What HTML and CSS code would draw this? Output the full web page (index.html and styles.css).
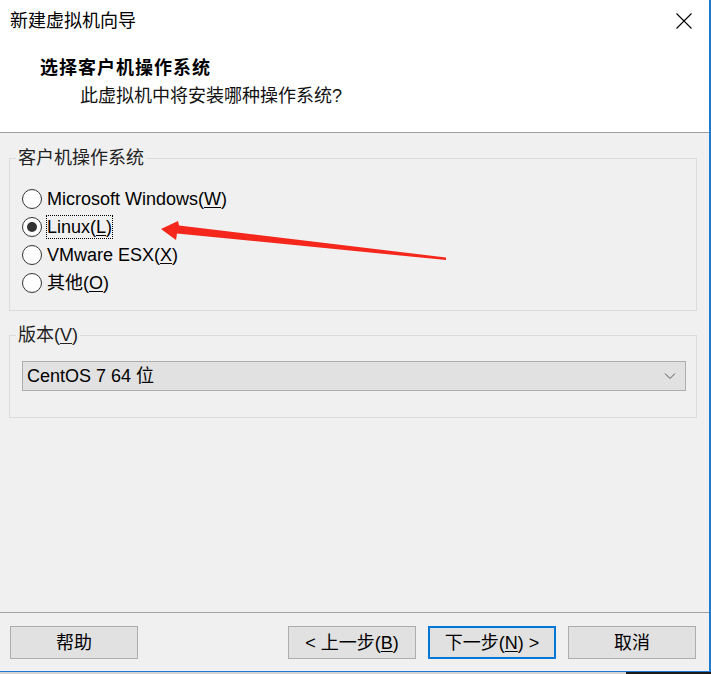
FILE: index.html
```html
<!DOCTYPE html>
<html lang="zh-CN">
<head>
    <meta charset="UTF-8">
    <meta name="viewport" content="width=device-width, initial-scale=1.0">
    <title>新建虚拟机向导</title>
    <link rel="stylesheet" href="styles.css">
</head>
<body>
    <div class="window">
        <div class="titlebar">
            <span class="title">新建虚拟机向导</span>
            <svg class="close-btn" width="16" height="16" viewBox="0 0 16 16">
                <path d="M0.5 0.5 L15.5 15.5 M15.5 0.5 L0.5 15.5" stroke="#000" stroke-width="1.1" fill="none"/>
            </svg>
        </div>

        <div class="header">
            <div class="heading">选择客户机操作系统</div>
            <div class="subheading">此虚拟机中将安装哪种操作系统?</div>
        </div>

        <div class="content">
            <fieldset class="group group-os">
                <legend>客户机操作系统</legend>
                <div class="radio-list">
                    <label class="radio"><span class="radio-circle"></span><span class="radio-text">Microsoft Windows(<u>W</u>)</span></label>
                    <label class="radio checked"><span class="radio-circle"></span><span class="radio-text focused">Linux(<u>L</u>)</span></label>
                    <label class="radio"><span class="radio-circle"></span><span class="radio-text">VMware ESX(<u>X</u>)</span></label>
                    <label class="radio"><span class="radio-circle"></span><span class="radio-text">其他(<u>O</u>)</span></label>
                </div>
            </fieldset>

            <fieldset class="group group-version">
                <legend>版本(<u>V</u>)</legend>
                <div class="select">
                    <span class="select-value">CentOS 7 64 位</span>
                    <svg class="chevron" width="12" height="8" viewBox="0 0 12 8">
                        <path d="M1 1.5 L6 6.5 L11 1.5" stroke="#555" stroke-width="1" fill="none"/>
                    </svg>
                </div>
            </fieldset>
        </div>

        <div class="footer">
            <button class="btn">帮助</button>
            <div class="nav">
                <button class="btn">&lt; 上一步(<u>B</u>)</button>
                <button class="btn btn-default">下一步(<u>N</u>) &gt;</button>
                <button class="btn">取消</button>
            </div>
        </div>

        <!-- annotation arrow drawn over the dialog -->
        <svg class="arrow" width="300" height="70" viewBox="0 0 300 70">
            <polygon points="11,29 28,21 29,25.5 296,57.5 296,60 27,33.5 26,40" fill="#f5261b"/>
        </svg>
    </div>
    <div class="strip">
        <div class="strip-left"></div>
        <div class="strip-right"></div>
    </div>
</body>
</html>
```

FILE: styles.css
```css
html, body { margin: 0; padding: 0; }
body {
    width: 711px;
    height: 674px;
    overflow: hidden;
    background-color: #d4d4d4;
    font-family: "Liberation Sans", "Noto Sans CJK SC", sans-serif;
    color: #000;
}

.window {
    position: relative;
    width: 711px;
    height: 672px;
    box-sizing: border-box;
    border-right: 2px solid #1c7ad2;
    border-bottom: 1px solid #1c7ad2;
    display: flex;
    flex-direction: column;
    background-color: #f0f0f0;
}

/* Title bar + header */
.titlebar {
    height: 42px;
    flex: none;
    display: flex;
    align-items: center;
    justify-content: space-between;
    padding: 0 17px 0 10px;
    background-color: #fff;
}
.title { font-size: 18px; line-height: 24px; }
.close-btn { display: block; }

.header {
    height: 91px;
    flex: none;
    box-sizing: border-box;
    padding-top: 13px;
    background-color: #fff;
    border-bottom: 1px solid #a0a0a0;
}
.heading {
    padding-left: 40px;
    font-size: 18px;
    line-height: 26px;
    font-weight: bold;
    letter-spacing: 1px;
}
.subheading {
    margin-top: 2px;
    padding-left: 80px;
    font-size: 18px;
    line-height: 26px;
    color: #111;
}

/* Group boxes */
.content { flex: 1; }
.group {
    margin: 14px 12px 0 9px;
    padding: 0 6px 13px;
    border: 1px solid #dcdcdc;
    min-width: 0;
}
.group-os { margin-top: 15px; }
.group-version { padding-bottom: 26px; }
.group legend {
    padding: 0 2px;
    font-size: 18px;
    line-height: 20px;
    color: #222;
}

.radio-list { margin-top: 17px; }
.radio {
    display: flex;
    align-items: center;
    height: 28px;
}
.radio-circle {
    width: 20px;
    height: 20px;
    box-sizing: border-box;
    margin-left: 6px;
    border: 1px solid #333;
    border-radius: 50%;
    background-color: #fff;
    display: flex;
    align-items: center;
    justify-content: center;
}
.radio.checked .radio-circle::after {
    content: "";
    width: 10px;
    height: 10px;
    border-radius: 50%;
    background-color: #333;
}
.radio-text {
    margin-left: 5px;
    font-size: 18px;
    line-height: 22px;
}
.radio-text.focused {
    display: inline-block;
    outline: 1px dotted #000;
    outline-offset: 0;
}
u { text-underline-offset: 2px; }

.select {
    margin: 16px 0 0 6px;
    width: 664px;
    height: 30px;
    box-sizing: border-box;
    border: 1px solid #adadad;
    background-color: #e1e1e1;
    padding: 0 9px 0 4px;
    display: flex;
    align-items: center;
    justify-content: space-between;
}
.select-value { font-size: 18px; line-height: 22px; }
.chevron { display: block; }

/* Footer buttons */
.footer {
    height: 59px;
    flex: none;
    box-sizing: border-box;
    border-top: 1px solid #a0a0a0;
    padding: 13px 13px 0 10px;
    display: flex;
    align-items: flex-start;
}
.nav {
    margin-left: auto;
    display: flex;
    gap: 12px;
}
.btn {
    width: 128px;
    height: 33px;
    box-sizing: border-box;
    border: 1px solid #adadad;
    background-color: #e1e1e1;
    font-family: "Liberation Sans", "Noto Sans CJK SC", sans-serif;
    font-size: 18px;
    line-height: 22px;
    color: #000;
    padding: 0;
}
.btn-default { border: 2px solid #0078d7; }

.arrow {
    position: absolute;
    left: 150px;
    top: 200px;
}

.strip { display: flex; height: 2px; }
.strip-left { width: 626px; background-color: #d4d4d4; }
.strip-right { flex: 1; background-color: #1a1a1a; }
```
